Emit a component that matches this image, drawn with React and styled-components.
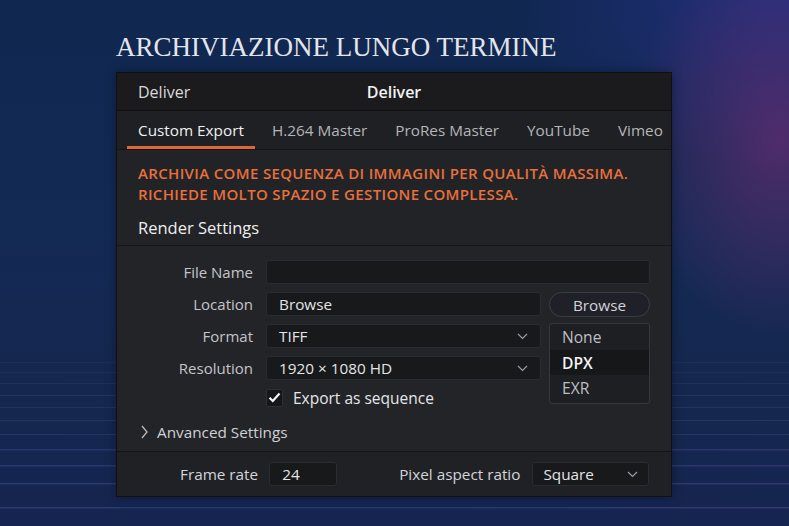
import React from 'react';
import styled, { createGlobalStyle } from 'styled-components';

const GlobalStyle = createGlobalStyle`
  html, body {
    margin: 0;
    padding: 0;
    background: #12274f;
  }
  body {
    font-family: 'Open Sans', 'Noto Sans', sans-serif;
  }
`;

const gridLines = [362, 372, 383, 395, 407, 420, 434, 449, 465, 483, 507];

const Page = styled.div`
  position: relative;
  width: 789px;
  height: 526px;
  overflow: hidden;
  box-sizing: border-box;
  padding: 32px 0 0 116px;
  background:
    radial-gradient(ellipse 150px 200px at 780px 140px, rgba(105, 45, 115, 0.7), rgba(105, 45, 115, 0) 100%),
    radial-gradient(ellipse 280px 170px at 789px 0px, rgba(40, 50, 140, 0.75), rgba(40, 50, 140, 0) 100%),
    linear-gradient(180deg, #102750 0%, #132a55 45%, #15274f 70%, #152550 100%);
`;

const Backdrop = styled.svg`
  position: absolute;
  left: 0;
  top: 0;
  pointer-events: none;
`;

const Title = styled.h1`
  position: relative;
  margin: 0 0 10px;
  font-family: 'Liberation Serif', 'DejaVu Serif', serif;
  font-weight: normal;
  font-size: 27px;
  line-height: 30px;
  color: #e4e5ec;
`;

const Panel = styled.div`
  position: relative;
  width: 556px;
  box-sizing: border-box;
  background: #222327;
  border: 1px solid #101012;
  box-shadow: 0 0 10px rgba(0, 0, 0, 0.35);
`;

const Header = styled.div`
  display: grid;
  grid-template-columns: 1fr auto 1fr;
  align-items: center;
  height: 37px;
  padding: 0 21px;
  background: #1b1b1d;
  border-bottom: 1px solid #111113;
  font-size: 16px;
  color: #d9d9dc;
`;

const HeaderTitle = styled.div`
  font-weight: 600;
  color: #f2f2f4;
`;

const TabBar = styled.div`
  display: flex;
  align-items: stretch;
  gap: 6px;
  height: 38px;
  padding: 0 0 0 10px;
  background: #1f2023;
  border-bottom: 1px solid #141416;
`;

const Tab = styled.div`
  display: flex;
  align-items: center;
  padding: 0 11px;
  font-size: 15.3px;
  white-space: nowrap;
  color: ${(p) => (p.active ? '#f0f0f2' : '#b4b5b9')};
  box-shadow: ${(p) => (p.active ? 'inset 0 -3px 0 #e0663a' : 'none')};
`;

const Intro = styled.div`
  padding: 13px 21px 6px;
`;

const Warning = styled.p`
  margin: 0 0 12px;
  font-size: 15px;
  font-weight: 600;
  letter-spacing: 0.35px;
  line-height: 21px;
  color: #e8703c;
`;

const SectionTitle = styled.div`
  font-size: 16.5px;
  line-height: 22px;
  color: #eeeef0;
`;

const FormSection = styled.div`
  border-top: 1px solid #18181b;
  border-bottom: 1px solid #131315;
  padding: 14px 21px 7px 0;
  background: #232428;
`;

const FormGrid = styled.div`
  display: grid;
  grid-template-columns: 149px 275px 109px;
  grid-template-rows: 24px 24px 24px 24px 22px;
  row-gap: 8px;
`;

const Label = styled.div`
  grid-column: 1;
  align-self: center;
  text-align: right;
  padding-right: 13px;
  font-size: 15px;
  color: #c3c4c8;
`;

const Field = styled.div`
  grid-column: ${(p) => (p.wide ? '2 / 4' : '2')};
  display: flex;
  align-items: center;
  justify-content: space-between;
  box-sizing: border-box;
  height: 24px;
  padding: 0 12px;
  background: #18191b;
  border: 1px solid #2b2c30;
  border-radius: 3px;
  font-size: 15.3px;
  color: #e4e4e6;
`;

const BrowseButton = styled.div`
  grid-column: 3;
  justify-self: end;
  display: flex;
  align-items: center;
  justify-content: center;
  box-sizing: border-box;
  width: 101px;
  height: 25px;
  border: 1px solid #3b3d46;
  border-radius: 13px;
  background: #202128;
  font-size: 15.3px;
  color: #d2d3d7;
`;

const Menu = styled.div`
  grid-column: 3;
  grid-row: 3 / 6;
  justify-self: end;
  align-self: start;
  margin-top: -1px;
  width: 101px;
  height: 81px;
  box-sizing: border-box;
  padding: 0 0 2px;
  background: #1e1f22;
  border: 1px solid #37383d;
  border-radius: 3px;
  display: flex;
  flex-direction: column;
`;

const MenuItem = styled.div`
  flex: 1;
  display: flex;
  align-items: center;
  padding: 0 12px;
  font-size: 15.6px;
  font-weight: ${(p) => (p.selected ? 600 : 400)};
  color: ${(p) => (p.selected ? '#f4f4f6' : '#bdbec2')};
  background: ${(p) => (p.selected ? '#161719' : 'transparent')};
`;

const CheckRow = styled.div`
  grid-column: 2;
  grid-row: 5;
  display: flex;
  align-items: center;
  gap: 10px;
  margin-top: -3px;
  font-size: 15.5px;
  color: #e6e6e8;
`;

const CheckBox = styled.div`
  display: flex;
  align-items: center;
  justify-content: center;
  width: 17px;
  height: 18px;
  box-sizing: border-box;
  background: #151618;
  border: 1px solid #2f3034;
  border-radius: 2px;
`;

const Disclosure = styled.div`
  display: flex;
  align-items: center;
  gap: 9px;
  margin: 10px 0 0 24px;
  height: 24px;
  font-size: 15.3px;
  color: #cfd0d3;
`;

const BottomRow = styled.div`
  display: flex;
  align-items: center;
  height: 44px;
  padding: 0 0 0 63px;
  background: #202125;
`;

const InlineLabel = styled.div`
  flex-shrink: 0;
  white-space: nowrap;
  font-size: 15.3px;
  color: #d4d5d8;
  margin-right: ${(p) => p.gap}px;
`;

const SmallField = styled(Field)`
  flex-shrink: 0;
  width: ${(p) => p.width}px;
  padding: 0 ${(p) => p.pad || 12}px;
  margin-right: ${(p) => p.after || 0}px;
`;

const Chevron = () => (
  <svg width="11" height="7" viewBox="0 0 11 7">
    <polyline points="1,1 5.5,5.5 10,1" fill="none" stroke="#9c9da2" strokeWidth="1.2" />
  </svg>
);

const ChevronRight = () => (
  <svg width="7" height="14" viewBox="0 0 7 14">
    <polyline points="1,1 6,7 1,13" fill="none" stroke="#b9babd" strokeWidth="1.3" />
  </svg>
);

const Check = () => (
  <svg width="13" height="11" viewBox="0 0 13 11">
    <path d="M1.5 5.8 L4.8 9 L11.5 1.5" fill="none" stroke="#f4f4f6" strokeWidth="2.2" />
  </svg>
);

const tabs = ['Custom Export', 'H.264 Master', 'ProRes Master', 'YouTube', 'Vimeo'];

export default function App() {
  return (
    <>
      <GlobalStyle />
      <Page>
        <Backdrop width="789" height="526">
          <defs>
            <linearGradient id="lineTone" x1="0" x2="1" y1="0" y2="0">
              <stop offset="0" stopColor="#5a78c8" />
              <stop offset="0.6" stopColor="#5a6cc0" />
              <stop offset="1" stopColor="#8a6ac8" />
            </linearGradient>
          </defs>
          {gridLines.map((y, i) => (
            <rect
              key={y}
              x="0"
              y={y}
              width="789"
              height={i > 6 ? 1.5 : 1}
              fill="url(#lineTone)"
              opacity={0.08 + i * 0.02}
            />
          ))}
        </Backdrop>

        <Title>ARCHIVIAZIONE LUNGO TERMINE</Title>

        <Panel>
          <Header>
            <div>Deliver</div>
            <HeaderTitle>Deliver</HeaderTitle>
            <div />
          </Header>

          <TabBar>
            {tabs.map((t, i) => (
              <Tab key={t} active={i === 0}>
                {t}
              </Tab>
            ))}
          </TabBar>

          <Intro>
            <Warning>
              ARCHIVIA COME SEQUENZA DI IMMAGINI PER QUALITÀ MASSIMA.
              <br />
              RICHIEDE MOLTO SPAZIO E GESTIONE COMPLESSA.
            </Warning>
            <SectionTitle>Render Settings</SectionTitle>
          </Intro>

          <FormSection>
            <FormGrid>
              <Label>File Name</Label>
              <Field wide />

              <Label>Location</Label>
              <Field>Browse</Field>
              <BrowseButton>Browse</BrowseButton>

              <Label>Format</Label>
              <Field>
                TIFF
                <Chevron />
              </Field>
              <Menu>
                <MenuItem>None</MenuItem>
                <MenuItem selected>DPX</MenuItem>
                <MenuItem>EXR</MenuItem>
              </Menu>

              <Label>Resolution</Label>
              <Field>
                1920 × 1080 HD
                <Chevron />
              </Field>

              <CheckRow>
                <CheckBox>
                  <Check />
                </CheckBox>
                Export as sequence
              </CheckRow>
            </FormGrid>

            <Disclosure>
              <ChevronRight />
              Anvanced Settings
            </Disclosure>
          </FormSection>

          <BottomRow>
            <InlineLabel gap={11}>Frame rate</InlineLabel>
            <SmallField width={68} after={62}>24</SmallField>
            <InlineLabel gap={12}>Pixel aspect ratio</InlineLabel>
            <SmallField width={117} pad={10}>
              Square
              <Chevron />
            </SmallField>
          </BottomRow>
        </Panel>
      </Page>
    </>
  );
}
